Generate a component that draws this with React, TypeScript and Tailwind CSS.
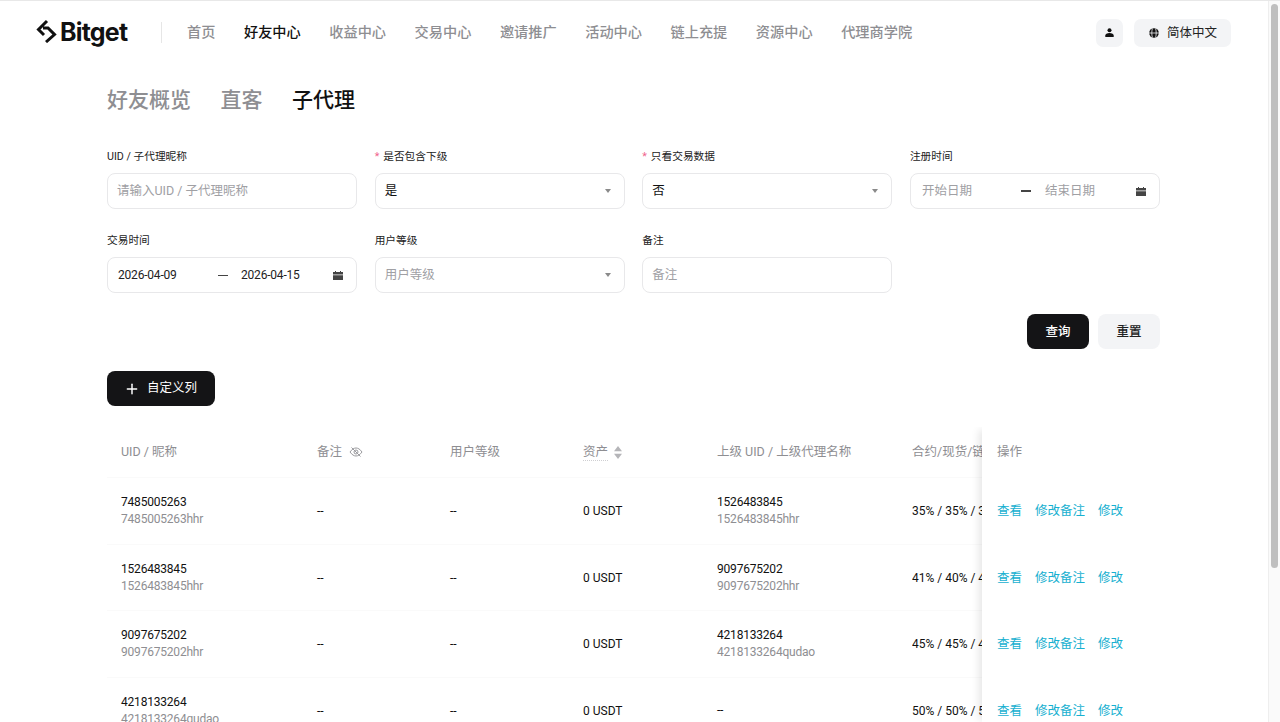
import { Plus } from "lucide-react";

const navItems = ["首页", "好友中心", "收益中心", "交易中心", "邀请推广", "活动中心", "链上充提", "资源中心", "代理商学院"];

const rows = [
  { uid: "7485005263", name: "7485005263hhr", parent: "1526483845", parentName: "1526483845hhr", rate: "35% / 35% / 35%" },
  { uid: "1526483845", name: "1526483845hhr", parent: "9097675202", parentName: "9097675202hhr", rate: "41% / 40% / 40%" },
  { uid: "9097675202", name: "9097675202hhr", parent: "4218133264", parentName: "4218133264qudao", rate: "45% / 45% / 45%" },
  { uid: "4218133264", name: "4218133264qudao", parent: "--", parentName: "", rate: "50% / 50% / 50%" },
];

function Logo() {
  return (
    <div className="flex items-center w-[92px] shrink-0">
      <svg width="22" height="24" viewBox="0 0 22 24" className="shrink-0 -ml-[1px] -mt-[3px]">
        <path d="M12 2 L3.5 10.5 L9 16 M8 9 H13 L19.5 15.5 L11 23" fill="none" stroke="#111" strokeWidth="3" />
      </svg>
      <span className="text-[#111] text-[25px] font-bold tracking-[-0.8px] leading-none font-[Inter,sans-serif] ml-[3px]">Bitget</span>
    </div>
  );
}

function CalendarIcon() {
  return (
    <svg width="10" height="9" viewBox="0 0 10 9" className="shrink-0">
      <path d="M2 0h1v1h4V0h1v1h2v2.4H0V1h2z M0 4.2h10V9H0z" fill="#444" />
    </svg>
  );
}

function Caret() {
  return (
    <svg width="6" height="4" viewBox="0 0 6 4" className="shrink-0">
      <path d="M0 0h6L3 4z" fill="#8a8a8a" />
    </svg>
  );
}

function Label({ text, required }: { text: string; required?: boolean }) {
  return (
    <div className="h-[14px] mb-[9px] flex items-center text-[10.7px] leading-[14px] text-[#222]">
      {required && <span className="text-[#f0648c] mr-[4px]">*</span>}
      {text}
    </div>
  );
}

function Box({ children }: { children: React.ReactNode }) {
  return (
    <div className="h-[36px] rounded-[8px] border border-[#e8e8ea] flex items-center text-[12.5px]">
      {children}
    </div>
  );
}

function Field({ label, placeholder }: { label: string; placeholder: string }) {
  return (
    <div className="pt-[1px]">
      <Label text={label} />
      <Box>
        <span className="pl-[9px] text-[#a0a0a4]">{placeholder}</span>
      </Box>
    </div>
  );
}

function SelectField({ label, value, placeholder, required }: { label: string; value?: string; placeholder?: string; required?: boolean }) {
  return (
    <div className="pt-[1px]">
      <Label text={label} required={required} />
      <Box>
        <span className={value ? "pl-[9px] text-[#111]" : "pl-[9px] text-[#a0a0a4]"}>{value ?? placeholder}</span>
        <span className="ml-auto mr-[13px] flex">
          <Caret />
        </span>
      </Box>
    </div>
  );
}

function DateField({ label, start, end, filled }: { label: string; start: string; end: string; filled?: boolean }) {
  return (
    <div className="pt-[1px]">
      <Label text={label} />
      <Box>
        {filled ? (
          <>
            <span className="pl-[10px] w-[110px] shrink-0 text-[12px] tracking-[-0.2px] text-[#222]">{start}</span>
            <span className="w-[10px] h-px bg-[#444]" />
            <span className="ml-[13px] text-[12px] tracking-[-0.2px] text-[#222]">{end}</span>
          </>
        ) : (
          <>
            <span className="pl-[11px] w-[110px] shrink-0 text-[#a0a0a4]">{start}</span>
            <span className="w-[10px] h-[1.5px] bg-[#444]" />
            <span className="ml-[14px] text-[#a0a0a4]">{end}</span>
          </>
        )}
        <span className="ml-auto mr-[13px] flex">
          <CalendarIcon />
        </span>
      </Box>
    </div>
  );
}

export default function App() {
  return (
    <div className="h-[722px] overflow-hidden bg-white flex font-[Roboto,'Noto_Sans_CJK_SC',sans-serif] border-t border-[#e8e8e8]">
      <div className="flex-1 min-w-0">
        {/* Header */}
        <header className="h-[63px] flex items-center pl-[36px] pr-[37px]">
          <Logo />
          <div className="w-px h-[21px] bg-[#e6e6e6] ml-[33px] mr-[25px]" />
          <nav className="flex gap-[28.55px] text-[14.2px] font-medium text-[#8e8e92]">
            {navItems.map((item) => (
              <span key={item} className={item === "好友中心" ? "text-[#111]" : ""}>
                {item}
              </span>
            ))}
          </nav>
          <div className="ml-auto flex items-center gap-[11px]">
            <div className="w-[27px] h-[28px] rounded-[7px] bg-[#f3f4f6] flex items-center justify-center">
              <svg width="9" height="9" viewBox="0 0 9 9">
                <circle cx="4.5" cy="2.2" r="2" fill="#111" />
                <path d="M0.3 9V7.4C0.3 6 2 5 4.5 5S8.7 6 8.7 7.4V9z" fill="#111" />
              </svg>
            </div>
            <div className="h-[28px] w-[97px] rounded-[7px] bg-[#f3f4f6] flex items-center pl-[15px] pt-[1px] text-[12.5px] text-[#222]">
              <svg width="10" height="10" viewBox="0 0 10 10" className="mr-[8px]">
                <circle cx="5" cy="5" r="4.8" fill="#111" />
                <path d="M0 5h10M3.4 0.5C2.6 3.4 2.6 6.6 3.4 9.5M6.6 0.5C7.4 3.4 7.4 6.6 6.6 9.5" fill="none" stroke="#f3f4f6" strokeWidth="0.8" />
              </svg>
              简体中文
            </div>
          </div>
        </header>

        <main className="pl-[107px] pr-[108px]">
          {/* Tabs */}
          <div className="mt-[20px] flex gap-[29.5px] text-[21px] leading-[32px] font-medium text-[#8e8e92]">
            <span>好友概览</span>
            <span>直客</span>
            <span className="text-[#111]">子代理</span>
          </div>

          {/* Filters */}
          <div className="mt-[33px] grid grid-cols-4 gap-x-[17.5px] gap-y-[24px]">
            <Field label="UID / 子代理昵称" placeholder="请输入UID / 子代理昵称" />
            <SelectField label="是否包含下级" value="是" required />
            <SelectField label="只看交易数据" value="否" required />
            <DateField label="注册时间" start="开始日期" end="结束日期" />
            <DateField label="交易时间" start="2026-04-09" end="2026-04-15" filled />
            <SelectField label="用户等级" placeholder="用户等级" />
            <Field label="备注" placeholder="备注" />
          </div>

          <div className="mt-[21px] flex justify-end gap-[9px] text-[12.5px] font-medium">
            <button className="w-[62px] h-[35px] pt-[1px] rounded-[8px] bg-[#141416] text-white">查询</button>
            <button className="w-[62px] h-[35px] pt-[1px] rounded-[8px] bg-[#f3f4f6] text-[#222]">重置</button>
          </div>

          <button className="mt-[22px] w-[108px] h-[35px] pl-[17px] rounded-[8px] bg-[#141416] text-white text-[12.5px] flex items-center gap-[7px]">
            <Plus size={16} strokeWidth={2.2} />
            自定义列
          </button>

          {/* Table */}
          <div className="relative mt-[21px] h-[296px] overflow-hidden text-[12.5px]">
            <div className="w-[875px]">
              <div className="h-[51px] flex items-center text-[#8e8e92] border-b border-[#fafafa]">
                <div className="pl-[14px] w-[210px] shrink-0">UID / 昵称</div>
                <div className="w-[133px] shrink-0 flex items-center gap-[7px]">
                  备注
                  <svg width="14" height="12" viewBox="0 0 14 12" fill="none" stroke="#9a9a9e" strokeWidth="1">
                    <path d="M1 6C3 3.2 5 2 7 2S11 3.2 13 6C11 8.8 9 10 7 10S3 8.8 1 6Z" />
                    <circle cx="7" cy="6" r="2" />
                    <path d="M2.5 1.5L11.5 10.5" />
                  </svg>
                </div>
                <div className="w-[133px] shrink-0">用户等级</div>
                <div className="w-[134px] shrink-0 flex items-center gap-[6px]">
                  <span className="border-b border-dotted border-[#cfcfd2] leading-[17px]">资产</span>
                  <svg width="8" height="13" viewBox="0 0 8 13">
                    <path d="M4 0L8 5.2H0z M4 13L0 7.8H8z" fill="#b5b5b8" />
                  </svg>
                </div>
                <div className="w-[195px] shrink-0">上级 UID / 上级代理名称</div>
                <div className="w-[70px] whitespace-nowrap overflow-hidden">合约/现货/链上返佣比例</div>
              </div>
              {rows.map((row) => (
                <div key={row.uid} className="h-[66.7px] flex items-center text-[#111] text-[12px] border-b border-[#fafafa]">
                  <div className="pl-[14px] w-[210px] shrink-0 leading-[17px] tracking-[-0.2px]">
                    <div>{row.uid}</div>
                    <div className="text-[#8e8e92]">{row.name}</div>
                  </div>
                  <div className="w-[133px] shrink-0">--</div>
                  <div className="w-[133px] shrink-0">--</div>
                  <div className="w-[134px] shrink-0">0 USDT</div>
                  <div className="w-[195px] shrink-0 leading-[17px] tracking-[-0.2px]">
                    <div>{row.parent}</div>
                    {row.parentName && <div className="text-[#8e8e92]">{row.parentName}</div>}
                  </div>
                  <div className="w-[70px] whitespace-nowrap overflow-hidden">{row.rate}</div>
                </div>
              ))}
            </div>

            {/* Fixed action column */}
            <div className="absolute top-0 right-0 bottom-0 w-[178px] bg-white shadow-[-6px_0_8px_-3px_rgba(0,0,0,0.1)]">
              <div className="h-[51px] pl-[15px] flex items-center text-[#8e8e92]">操作</div>
              {rows.map((row) => (
                <div key={row.uid} className="h-[66.7px] pl-[15px] flex items-center gap-[13px] text-[#17b0d0]">
                  <span>查看</span>
                  <span>修改备注</span>
                  <span>修改</span>
                </div>
              ))}
            </div>
          </div>
        </main>
      </div>

      {/* Scrollbar */}
      <div className="w-[12px] shrink-0 bg-[#fafafa] border-l border-[#eeeeee] flex justify-center pt-[3px]">
        <div className="w-[7px] h-[564px] rounded-full bg-[#bfbfbf]" />
      </div>
    </div>
  );
}
